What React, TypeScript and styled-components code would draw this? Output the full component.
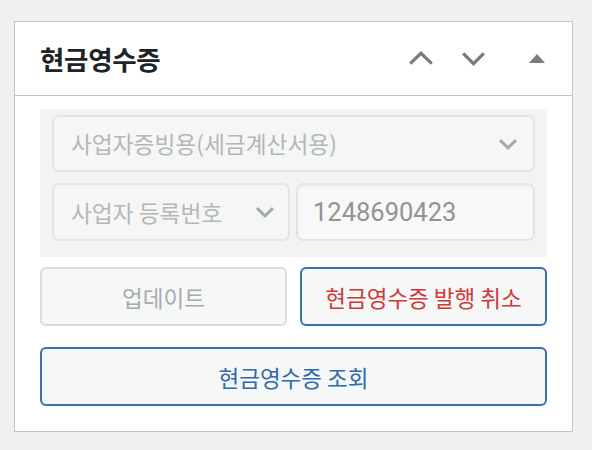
import React from "react";
import styled, { createGlobalStyle } from "styled-components";

const Global = createGlobalStyle`
  html, body { margin: 0; padding: 0; background: #f0f0f1; }
  body { font-family: Roboto, "Noto Sans CJK KR", sans-serif; }
  * { box-sizing: border-box; }
`;

const Page = styled.div`
  padding: 21px 0 0 14px;
`;

const Panel = styled.section`
  width: 559px;
  background: #fff;
  border: 1px solid #c3c4c7;
`;

const Header = styled.header`
  height: 74px;
  border-bottom: 1px solid #c3c4c7;
  display: flex;
  align-items: center;
  padding: 0 0 0 25px;
`;

const Title = styled.h2`
  margin: 0;
  flex: 1;
  font-family: "Noto Sans CJK KR", sans-serif;
  font-size: 26.5px;
  font-weight: 700;
  color: #1d2327;
  letter-spacing: -0.3px;
`;

const Tools = styled.div`
  display: flex;
  align-items: center;
`;

const ToolBtn = styled.span<{ $w: number; $ml: number }>`
  display: flex;
  align-items: center;
  justify-content: center;
  width: ${(p) => p.$w}px;
  margin-left: ${(p) => p.$ml}px;
  color: #787c82;
`;

const Body = styled.div`
  padding: 13px 25px 25px 25px;
`;

const Fields = styled.div`
  background: #f3f3f3;
  padding: 6px 12px 16px 12px;
  display: flex;
  flex-direction: column;
  gap: 11px;
`;

const Row = styled.div`
  display: flex;
  gap: 6px;
`;

const Select = styled.div<{ $h: number; $pr: number }>`
  flex: 1 1 0;
  min-height: ${(p) => p.$h}px;
  display: flex;
  align-items: center;
  justify-content: space-between;
  padding: 0 ${(p) => p.$pr}px 0 17px;
  background: #f5f6f6;
  border: 2px solid #e4e4e5;
  border-radius: 7px;
  font-family: "Noto Sans CJK KR", sans-serif;
  font-size: 22.7px;
  color: #b4b6b8;
  white-space: nowrap;
`;

const Input = styled.div`
  flex: 1 1 0;
  min-height: 58px;
  display: flex;
  align-items: center;
  padding: 0 15px;
  background: #f8f8f8;
  border: 2px solid #e4e4e5;
  border-radius: 7px;
  box-shadow: inset 0 2px 3px rgba(0, 0, 0, 0.04);
  font-family: Roboto, "Noto Sans CJK KR", sans-serif;
  font-size: 25.5px;
  color: #929396;
`;

const Buttons = styled.div`
  margin-top: 10px;
  display: grid;
  grid-template-columns: 1fr 1fr;
  column-gap: 13px;
  row-gap: 21px;
`;

const Button = styled.button<{ $tone: "off" | "danger" | "primary"; $wide?: boolean }>`
  grid-column: ${(p) => (p.$wide ? "1 / span 2" : "auto")};
  height: 59px;
  background: #f6f7f7;
  border: 2px solid ${(p) => (p.$tone === "off" ? "#dcdcde" : "#3a70b0")};
  border-radius: 6px;
  font-family: "Noto Sans CJK KR", sans-serif;
  font-size: 22.5px;
  color: ${(p) =>
    p.$tone === "off" ? "#a7aaad" : p.$tone === "danger" ? "#d0393a" : "#2f6aad"};
  padding: 0;
  cursor: pointer;
`;

const Chevron = ({ up, w, h, color, sw }: { up?: boolean; w: number; h: number; color: string; sw: number }) => (
  <svg width={w} height={h} viewBox={`0 0 ${w} ${h}`} fill="none">
    <polyline
      points={
        up
          ? `${sw},${h - sw / 1.4} ${w / 2},${sw / 1.4} ${w - sw},${h - sw / 1.4}`
          : `${sw},${sw / 1.4} ${w / 2},${h - sw / 1.4} ${w - sw},${sw / 1.4}`
      }
      stroke={color}
      strokeWidth={sw}
      strokeLinecap="butt"
      strokeLinejoin="miter"
    />
  </svg>
);

export default function App() {
  return (
    <>
      <Global />
      <Page>
        <Panel>
          <Header>
            <Title>현금영수증</Title>
            <Tools>
              <ToolBtn $w={28} $ml={0}>
                <Chevron up w={28} h={15} color="#787c82" sw={3.2} />
              </ToolBtn>
              <ToolBtn $w={27} $ml={25}>
                <Chevron w={27} h={15} color="#787c82" sw={3.2} />
              </ToolBtn>
              <ToolBtn $w={16} $ml={42}>
                <svg width="16" height="9" viewBox="0 0 16 9">
                  <polygon points="8,0 16,9 0,9" fill="#787c82" />
                </svg>
              </ToolBtn>
              <ToolBtn $w={27} $ml={0} />
            </Tools>
          </Header>
          <Body>
            <Fields>
              <Select $h={57} $pr={14}>
                <span>사업자증빙용(세금계산서용)</span>
                <Chevron w={22} h={12} color="#a7aaad" sw={3} />
              </Select>
              <Row>
                <Select $h={58} $pr={12}>
                  <span>사업자 등록번호</span>
                  <Chevron w={22} h={12} color="#a7aaad" sw={3} />
                </Select>
                <Input>1248690423</Input>
              </Row>
            </Fields>
            <Buttons>
              <Button $tone="off">업데이트</Button>
              <Button $tone="danger">현금영수증 발행 취소</Button>
              <Button $tone="primary" $wide>현금영수증 조회</Button>
            </Buttons>
          </Body>
        </Panel>
      </Page>
    </>
  );
}
